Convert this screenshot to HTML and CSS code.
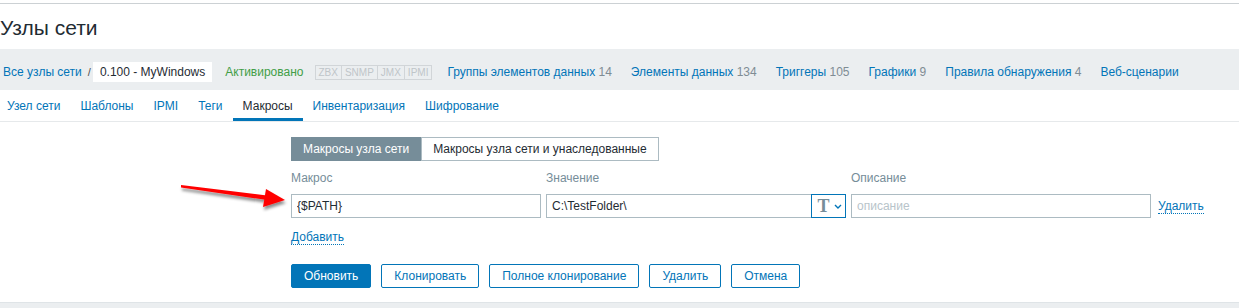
FILE: index.html
```html
<!DOCTYPE html>
<html lang="ru">
<head>
    <meta charset="UTF-8">
    <title>Узлы сети</title>
    <link rel="stylesheet" href="styles.css">
</head>
<body>

    <div class="page">
        <div class="top-line"></div>

        <!-- Page title -->
        <header class="title-bar">
            <h1>Узлы сети</h1>
        </header>

        <!-- Host navigation -->
        <div class="host-nav">
            <a class="crumb" href="#">Все узлы сети</a>
            <span class="crumb-sep">/</span>
            <span class="crumb-host">0.100 - MyWindows</span>
            <span class="status-on">Активировано</span>
            <span class="status-list">
                <span>ZBX</span><span>SNMP</span><span>JMX</span><span>IPMI</span>
            </span>
            <a class="nav-link first" href="#">Группы элементов данных <span class="count">14</span></a>
            <a class="nav-link" href="#">Элементы данных <span class="count">134</span></a>
            <a class="nav-link" href="#">Триггеры <span class="count">105</span></a>
            <a class="nav-link" href="#">Графики <span class="count">9</span></a>
            <a class="nav-link" href="#">Правила обнаружения <span class="count">4</span></a>
            <a class="nav-link" href="#">Веб-сценарии</a>
        </div>

        <!-- Tabs -->
        <ul class="tabs">
            <li><a href="#">Узел сети</a></li>
            <li><a href="#">Шаблоны</a></li>
            <li><a href="#">IPMI</a></li>
            <li><a href="#">Теги</a></li>
            <li><a class="active" href="#">Макросы</a></li>
            <li><a href="#">Инвентаризация</a></li>
            <li><a href="#">Шифрование</a></li>
        </ul>

        <!-- Macros form -->
        <form class="macro-form">
            <div class="segmented">
                <span class="seg active">Макросы узла сети</span>
                <span class="seg">Макросы узла сети и унаследованные</span>
            </div>

            <div class="macro-grid">
                <label>Макрос</label>
                <label>Значение</label>
                <label>Описание</label>
                <span></span>

                <input class="field" type="text" value="{$PATH}">
                <div class="value-field">
                    <input class="field" type="text" value="C:\TestFolder\">
                    <button class="type-btn" type="button">
                        <span class="type-t">T</span>
                        <svg width="8" height="5" viewBox="0 0 8 5"><path d="M1 1l3 3 3-3" fill="none" stroke="#0275b8" stroke-width="1.4"/></svg>
                    </button>
                </div>
                <input class="field" type="text" placeholder="описание">
                <a class="link remove" href="#">Удалить</a>
            </div>

            <a class="link add" href="#">Добавить</a>

            <div class="buttons">
                <button class="btn primary" type="button">Обновить</button>
                <button class="btn" type="button">Клонировать</button>
                <button class="btn" type="button">Полное клонирование</button>
                <button class="btn" type="button">Удалить</button>
                <button class="btn" type="button">Отмена</button>
            </div>
        </form>

        <div class="footer-band"></div>
    </div>

    <!-- red annotation arrow -->
    <svg class="arrow" width="120" height="40" viewBox="0 0 120 40">
        <defs>
            <filter id="shadow" x="-20%" y="-50%" width="140%" height="200%">
                <feDropShadow dx="1" dy="3" stdDeviation="1.6" flood-color="#000" flood-opacity="0.45"/>
            </filter>
        </defs>
        <g filter="url(#shadow)">
            <path d="M6 6 L92 16.5 L92 21 L6 8.5 Z" fill="#ff0000"/>
            <path d="M91 10 L110 21 L88 28 Z" fill="#ff0000"/>
        </g>
    </svg>

</body>
</html>
```

FILE: styles.css
```css
/* Global */
html, body {
    margin: 0;
    padding: 0;
    overflow: hidden;
}

body {
    font-family: "Liberation Sans", Arial, sans-serif;
    font-size: 12px;
    color: #1f2c33;
    background: #fff;
}

a {
    color: #0275b8;
    text-decoration: none;
}

.page {
    margin-left: -3px;
}

.top-line {
    height: 3px;
    border-bottom: 1px solid #ccd1d4;
}

/* Title */
.title-bar {
    height: 45px;
    box-sizing: border-box;
    padding: 12px 0 0 3px;
}

.title-bar h1 {
    margin: 0;
    font-size: 21px;
    line-height: 24px;
    font-weight: normal;
    color: #1f2c33;
}

/* Host navigation */
.host-nav {
    display: flex;
    align-items: center;
    height: 41px;
    box-sizing: border-box;
    padding: 13px 0 8px 6px;
    background: #ebeef0;
    white-space: nowrap;
}

.crumb-sep {
    margin-left: 6px;
    color: #4f4f4f;
    font-size: 11px;
}

.crumb-host {
    margin-left: 2px;
    height: 20px;
    line-height: 20px;
    padding: 0 7px;
    background: #fff;
}

.status-on {
    margin-left: 13px;
    color: #429e47;
}

.status-list {
    display: flex;
    margin-left: 12px;
}

.status-list span {
    height: 13px;
    line-height: 13px;
    padding: 0 3px;
    border: 1px solid #d1d5d8;
    margin-left: -1px;
    font-size: 10px;
    color: #bfc5c9;
}

.nav-link {
    margin-left: 19px;
}

.nav-link.first {
    margin-left: 15px;
}

.count {
    color: #7f8c94;
}

/* Tabs */
.tabs {
    display: flex;
    margin: 0;
    padding: 0;
    list-style: none;
    border-bottom: 1px solid #e6e9eb;
}

.tabs a {
    display: block;
    padding: 9px 10px 5px;
    line-height: 14px;
    border-bottom: 3px solid transparent;
}

.tabs a.active {
    color: #1f2c33;
    border-bottom-color: #0275b8;
}

/* Form */
.macro-form {
    padding: 15px 0 14px 294px;
}

.segmented {
    display: flex;
    height: 24px;
}

.seg {
    line-height: 22px;
    padding: 0 11px;
    border: 1px solid #acbbc2;
    color: #1f2c33;
}

.seg.active {
    background: #768d99;
    border-color: #768d99;
    color: #fff;
}

.macro-grid {
    display: grid;
    grid-template-columns: 250px 300px 300px auto;
    column-gap: 5px;
    row-gap: 9px;
    align-items: center;
    margin-top: 10px;
}

.macro-grid label {
    line-height: 14px;
    color: #768d99;
}

.field {
    box-sizing: border-box;
    width: 100%;
    height: 24px;
    padding: 0 5px;
    border: 1px solid #acbbc2;
    font-family: "Liberation Sans", Arial, sans-serif;
    font-size: 12px;
    color: #1f2c33;
    outline: none;
}

.field::placeholder {
    color: #b8c4ca;
}

.value-field {
    display: flex;
}

.type-btn {
    display: flex;
    align-items: center;
    justify-content: center;
    gap: 4px;
    flex: 0 0 35px;
    height: 24px;
    margin-left: -1px;
    padding: 0 0 0 2px;
    border: 1px solid #0275b8;
    background: #fff;
}

.type-t {
    font-family: "Liberation Serif", "Times New Roman", serif;
    font-weight: bold;
    font-size: 18px;
    line-height: 18px;
    color: #768d99;
}

.link {
    line-height: 14px;
    border-bottom: 1px dotted #0275b8;
}

.remove {
    justify-self: start;
    margin-left: 2px;
}

.add {
    display: inline-block;
    margin-top: 12px;
}

/* Buttons */
.buttons {
    display: flex;
    gap: 10px;
    margin-top: 19px;
}

.btn {
    height: 24px;
    padding: 0 12px;
    border: 1px solid #0275b8;
    border-radius: 2px;
    background: #fff;
    color: #0275b8;
    font-family: "Liberation Sans", Arial, sans-serif;
    font-size: 12px;
}

.btn.primary {
    background: #0275b8;
    color: #fff;
}

.footer-band {
    height: 5px;
    border-top: 1px solid #dfe4e7;
    background: #ebeef0;
}

/* Annotation */
.arrow {
    position: absolute;
    left: 175px;
    top: 179px;
}
```
